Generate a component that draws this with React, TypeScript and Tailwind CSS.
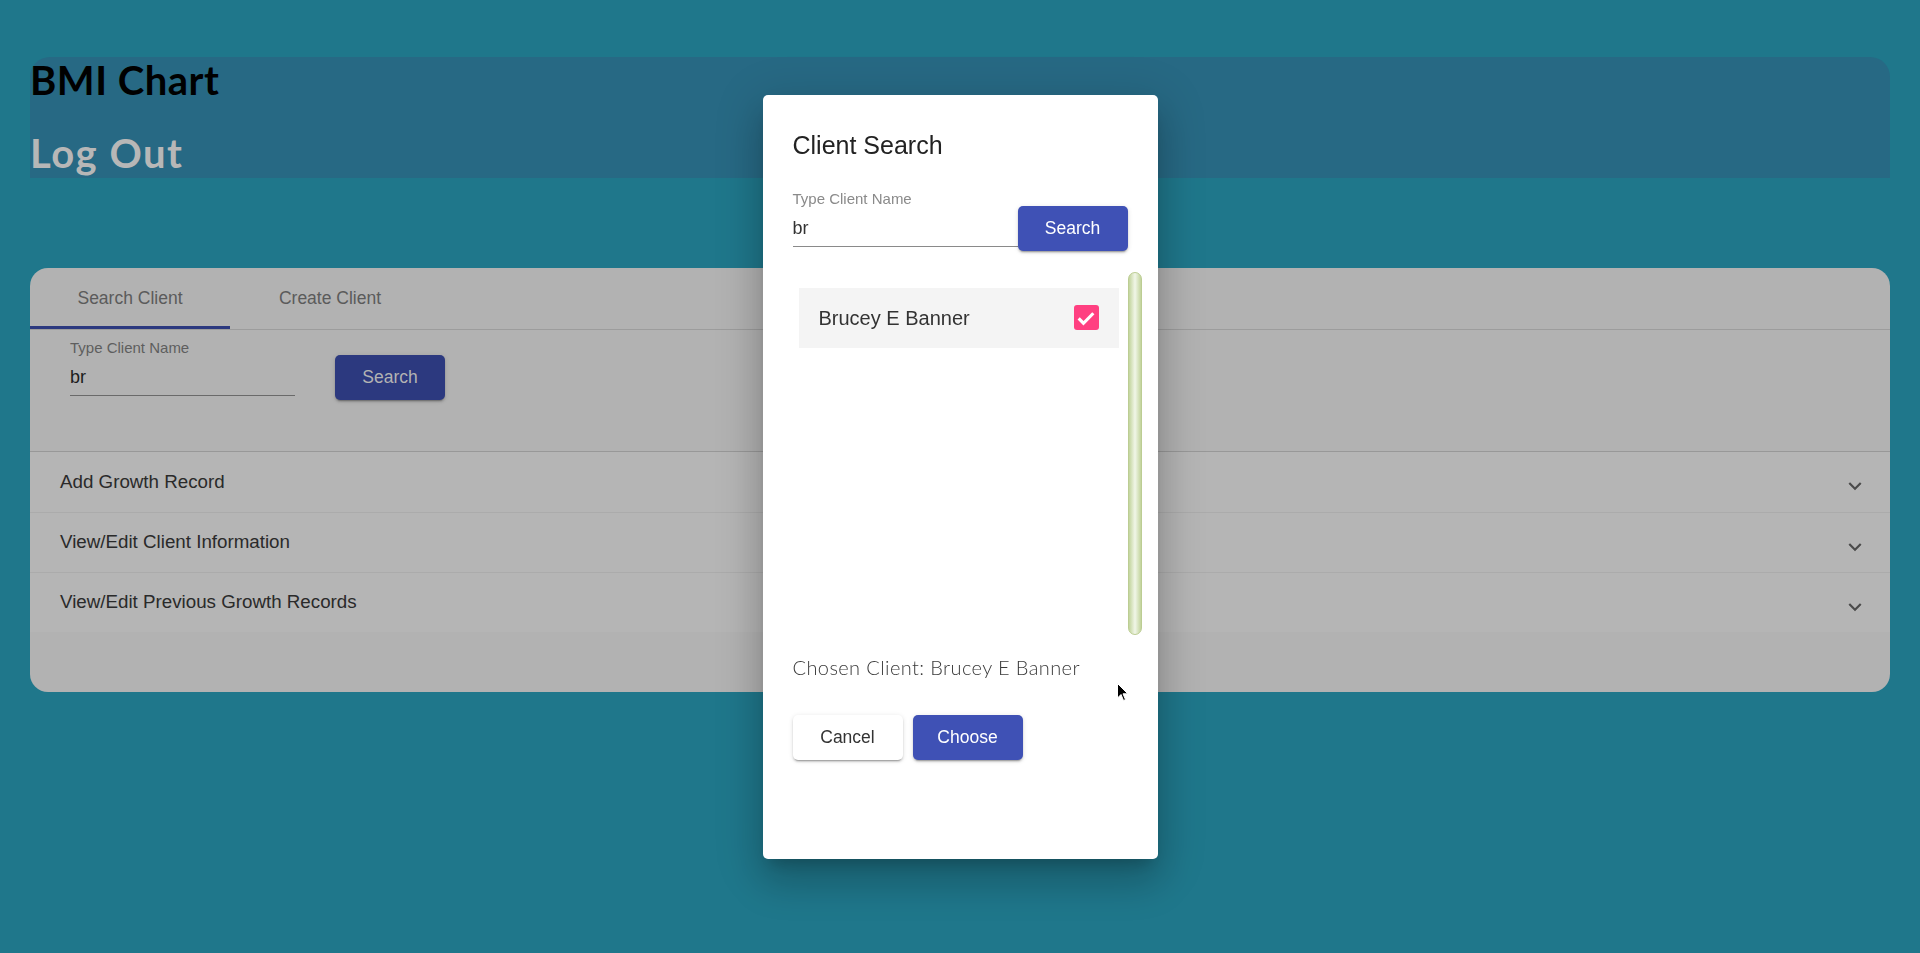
import React from 'react';

const ExpandMore = () => (
  <svg width="26" height="26" viewBox="0 0 24 24" className="fill-[#4b4b4b] mt-[8px]">
    <path d="M16.59 8.59L12 13.17 7.41 8.59 6 10l6 6 6-6z" />
  </svg>
);

const sections = ['Add Growth Record', 'View/Edit Client Information', 'View/Edit Previous Growth Records'];

const raised =
  'shadow-[0px_3px_1px_-2px_rgba(0,0,0,0.2),0px_2px_2px_0px_rgba(0,0,0,0.14),0px_1px_5px_0px_rgba(0,0,0,0.12)]';

const App: React.FC = () => {
  return (
    <div className="min-h-screen bg-[#1f778b] px-[30px] pt-[57px] font-['Liberation_Sans',Arial,sans-serif]">
      {/* header */}
      <header className="h-[121px] rounded-t-[20px] bg-[#276984] pt-[3px] flex flex-col gap-[33px] font-['Lato',sans-serif] font-bold text-[40px] leading-[40px]">
        <h1 className="text-black tracking-[0.5px]">BMI Chart</h1>
        <h1 className="text-[#b7b7b7] tracking-[1.5px]">Log Out</h1>
      </header>

      {/* main card */}
      <div className="mt-[90px] h-[424px] rounded-[18px] bg-[#b2b2b2] overflow-hidden">
        <div className="flex h-[62px] border-b border-[#9c9c9c] text-[17.5px] text-[#5b5b5b]">
          <div className="w-[200px] flex items-center justify-center border-b-[3px] border-[#2c397f] pt-[3px]">Search Client</div>
          <div className="w-[200px] flex items-center justify-center">Create Client</div>
        </div>
        <div className="h-[122px] border-b border-[#989898] pl-[40px] pt-[10px] flex items-start">
          <div className="w-[225px]">
            <div className="text-[15px] leading-[15px] text-[#5e5e5e]">Type Client Name</div>
            <div className="mt-[4px] h-[37px] flex items-center text-[18px] text-[#1c1c1c] border-b border-[#6a6a6a]">br</div>
          </div>
          <button className={`ml-[40px] mt-[15px] w-[110px] h-[45px] rounded-[5px] bg-[#2c397f] text-[#b3b3b3] text-[17.5px] ${raised}`}>
            Search
          </button>
        </div>
        {sections.map((s, i) => (
          <div
            key={s}
            className={`h-[60px] bg-[#b5b5b5] flex items-center justify-between pl-[30px] pr-[22px] text-[18.75px] text-[#2a2a2a] ${i > 0 ? 'border-t border-[#ababab]' : ''}`}
          >
            <span>{s}</span>
            <ExpandMore />
          </div>
        ))}
      </div>

      {/* dialog */}
      <div className="fixed inset-0 flex items-center justify-center">
        <div className="w-[395px] h-[764px] bg-white rounded-[5px] px-[30px] pt-[30px] shadow-[0px_11px_15px_-7px_rgba(0,0,0,0.2),0px_24px_38px_3px_rgba(0,0,0,0.14),0px_9px_46px_8px_rgba(0,0,0,0.12)]">
          <h2 className="h-[40px] leading-[40px] text-[25px] text-[#222]">Client Search</h2>
          <div className="mt-[26px] flex items-start h-[60px]">
            <div className="w-[225px]">
              <div className="text-[15px] leading-[15px] text-[#8a8a8a]">Type Client Name</div>
              <div className="mt-[3px] h-[38px] pt-[3px] flex items-center text-[18px] text-[#333] border-b border-[#8a8a8a]">br</div>
            </div>
            <button className={`mt-[15px] w-[110px] h-[45px] rounded-[5px] bg-[#3f51b5] text-white text-[17.5px] ${raised}`}>
              Search
            </button>
          </div>

          <div className="mt-[21px] mr-[-14px] h-[363px] flex">
            <div className="flex-1 pl-[6px] pt-[16px]">
              <div className="w-[320px] h-[60px] bg-[#f4f4f4] flex items-center justify-between px-[20px]">
                <span className="text-[20px] text-[#333]">Brucey E Banner</span>
                <span className="w-[25px] h-[25px] rounded-[3px] bg-[#ff4081] flex items-center justify-center">
                  <svg width="22" height="22" viewBox="0 0 24 24">
                    <path d="M4 12.5l5.2 5.2L20 6.8" fill="none" stroke="white" strokeWidth="3.4" />
                  </svg>
                </span>
              </div>
            </div>
            <div className="w-[14px] h-full rounded-full border border-[#bccd93] bg-[linear-gradient(90deg,#c2d49c,#f1f6e8_50%,#c2d49c)]" />
          </div>

          <p className="mt-[20px] leading-[24px] text-[20px] font-['Lato',sans-serif] font-light tracking-[0.4px] text-[#3a3a3a]">
            Chosen Client: Brucey E Banner
          </p>

          <div className="mt-[36px] flex gap-[10px]">
            <button className={`w-[110px] h-[45px] rounded-[5px] bg-white text-[#333] text-[17.5px] ${raised}`}>
              Cancel
            </button>
            <button className={`w-[110px] h-[45px] rounded-[5px] bg-[#3f51b5] text-white text-[17.5px] ${raised}`}>
              Choose
            </button>
          </div>
        </div>
      </div>

      {/* mouse pointer */}
      <svg className="fixed left-[1117px] top-[683px]" width="12" height="19" viewBox="0 0 12 19">
        <path d="M0.5 0.5 L0.5 15 L4 11.5 L6.5 17.5 L8.5 16.6 L6 10.8 L10.8 10.8 Z" fill="black" stroke="white" strokeWidth="1" />
      </svg>
    </div>
  );
};

export default App;
